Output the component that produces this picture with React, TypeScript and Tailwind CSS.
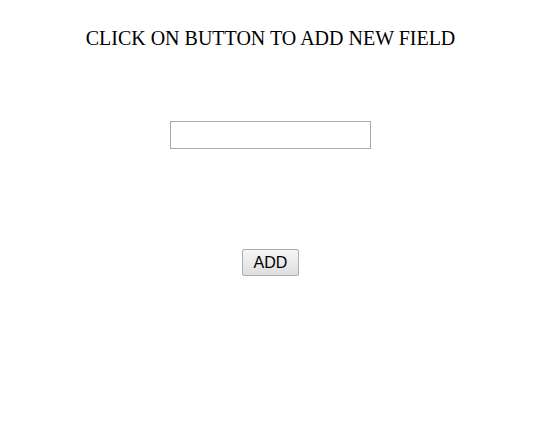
export default function App() {
  return (
    <div className="w-[541px] h-[432px] bg-white flex flex-col items-center">
      <h1 className="mt-[26px] text-[20px] leading-[24px] text-black font-['Liberation_Serif',serif]">
        CLICK ON BUTTON TO ADD NEW FIELD
      </h1>
      <input
        type="text"
        className="mt-[71px] w-[201px] h-[28px] border border-[#a9a9a9] bg-white outline-none"
      />
      <button className="mt-[100px] w-[57px] h-[27px] border border-[#adadad] rounded-[2px] bg-gradient-to-b from-[#f6f6f6] to-[#dedede] text-[16px] leading-none text-black font-['Liberation_Sans',Arial,sans-serif]">
        ADD
      </button>
    </div>
  )
}
